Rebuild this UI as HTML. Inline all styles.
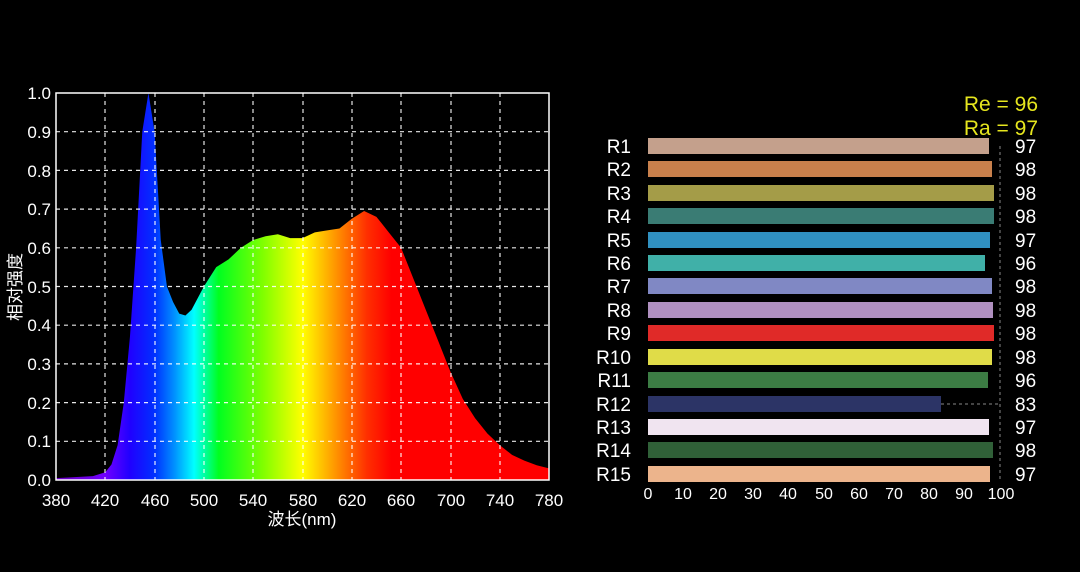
<!DOCTYPE html>
<html><head><meta charset="utf-8"><style>
body{margin:0;width:1080px;height:572px;background:#000;overflow:hidden;font-family:"Liberation Sans","Noto Sans CJK SC",sans-serif;color:#fff;position:relative}
.a{position:absolute}
.lbl{position:absolute;font-size:19px;text-align:right;width:42px;left:589px;line-height:18px;margin-top:2px}
.val{position:absolute;font-size:19px;left:1015px;line-height:18px;margin-top:2px}
.bar{position:absolute;left:648px;height:16px}
</style></head><body>
<svg class="a" style="left:0;top:0" width="1080" height="572">
<defs>
<linearGradient id="sp" gradientUnits="userSpaceOnUse" x1="0" y1="0" x2="400" y2="0">
<stop offset="0" stop-color="#6a00c0"/>
<stop offset="0.1" stop-color="#7000ff"/>
<stop offset="0.15" stop-color="#2000ff"/>
<stop offset="0.2" stop-color="#0030ff"/>
<stop offset="0.24" stop-color="#0090ff"/>
<stop offset="0.28" stop-color="#00ffff"/>
<stop offset="0.33" stop-color="#00ff20"/>
<stop offset="0.42" stop-color="#80ff00"/>
<stop offset="0.5" stop-color="#ffff00"/>
<stop offset="0.56" stop-color="#ffa000"/>
<stop offset="0.63" stop-color="#ff3000"/>
<stop offset="0.68" stop-color="#ff0000"/>
<stop offset="1" stop-color="#ff0000"/>
</linearGradient>
</defs>
<g transform="translate(56,480) scale(1.2325,-387)">
<polygon fill="url(#sp)" points="0,0 0,0.005 30,0.01 40,0.02 45,0.04 50,0.09 55,0.2 60,0.37 65,0.6 70,0.9 75,1.0 80,0.9 85,0.62 90,0.5 95,0.46 100,0.43 105,0.425 110,0.44 120,0.5 130,0.55 140,0.57 150,0.6 160,0.62 170,0.63 180,0.635 190,0.625 200,0.625 210,0.64 220,0.645 230,0.65 240,0.675 250,0.695 260,0.68 270,0.64 280,0.6 290,0.52 300,0.44 310,0.36 320,0.28 330,0.21 340,0.16 350,0.12 360,0.09 370,0.065 380,0.05 390,0.038 400,0.03 400,0"/>
</g>
<g stroke="#fff" stroke-width="1.2" stroke-dasharray="4,4" opacity="0.9">
<line x1="105" y1="93" x2="105" y2="480"/><line x1="155" y1="93" x2="155" y2="480"/><line x1="204" y1="93" x2="204" y2="480"/><line x1="253" y1="93" x2="253" y2="480"/><line x1="303" y1="93" x2="303" y2="480"/><line x1="352" y1="93" x2="352" y2="480"/><line x1="401" y1="93" x2="401" y2="480"/><line x1="451" y1="93" x2="451" y2="480"/><line x1="500" y1="93" x2="500" y2="480"/>
<line x1="56" y1="131.7" x2="549" y2="131.7"/><line x1="56" y1="170.4" x2="549" y2="170.4"/><line x1="56" y1="209.1" x2="549" y2="209.1"/><line x1="56" y1="247.8" x2="549" y2="247.8"/><line x1="56" y1="286.5" x2="549" y2="286.5"/><line x1="56" y1="325.2" x2="549" y2="325.2"/><line x1="56" y1="363.9" x2="549" y2="363.9"/><line x1="56" y1="402.6" x2="549" y2="402.6"/><line x1="56" y1="441.3" x2="549" y2="441.3"/>
</g>
<rect x="56" y="93" width="493" height="387" fill="none" stroke="#fff" stroke-width="1.5"/>
<g fill="#fff" font-size="17" font-family="Liberation Sans,sans-serif" text-anchor="end">
<text x="51" y="99">1.0</text><text x="51" y="138">0.9</text><text x="51" y="177">0.8</text><text x="51" y="215">0.7</text><text x="51" y="254">0.6</text><text x="51" y="293">0.5</text><text x="51" y="331">0.4</text><text x="51" y="370">0.3</text><text x="51" y="409">0.2</text><text x="51" y="447">0.1</text><text x="51" y="486">0.0</text>
</g>
<g fill="#fff" font-size="17" font-family="Liberation Sans,sans-serif" text-anchor="middle">
<text x="56" y="506">380</text><text x="105" y="506">420</text><text x="155" y="506">460</text><text x="204" y="506">500</text><text x="253" y="506">540</text><text x="303" y="506">580</text><text x="352" y="506">620</text><text x="401" y="506">660</text><text x="451" y="506">700</text><text x="500" y="506">740</text><text x="549" y="506">780</text>
<text x="302" y="525" font-family="Liberation Sans,Noto Sans CJK SC,sans-serif">波长(nm)</text>
<text transform="translate(21,287) rotate(-90)" font-family="Liberation Sans,Noto Sans CJK SC,sans-serif">相对强度</text>
</g>
<line x1="1000" y1="146" x2="1000" y2="482" stroke="#888" stroke-dasharray="3,3"/>
<line x1="941" y1="404" x2="1000" y2="404" stroke="#888" stroke-dasharray="3,3"/>
<g fill="#fff" font-size="16" font-family="Liberation Sans,sans-serif" text-anchor="middle">
<text x="648" y="499">0</text><text x="683" y="499">10</text><text x="718" y="499">20</text><text x="753" y="499">30</text><text x="788" y="499">40</text><text x="824" y="499">50</text><text x="859" y="499">60</text><text x="894" y="499">70</text><text x="929" y="499">80</text><text x="964" y="499">90</text><text x="1001" y="499">100</text>
</g>
<g fill="#e6e61e" font-size="21" font-family="Liberation Sans,sans-serif" text-anchor="end">
<text x="1038" y="111">Re = 96</text><text x="1038" y="135">Ra = 97</text>
</g>
</svg>
<div class="lbl" style="top:137px">R1</div><div class="bar" style="top:138px;width:341px;background:#c4a08c"></div><div class="val" style="top:137px">97</div>
<div class="lbl" style="top:160px">R2</div><div class="bar" style="top:161px;width:344px;background:#c8804c"></div><div class="val" style="top:160px">98</div>
<div class="lbl" style="top:184px">R3</div><div class="bar" style="top:185px;width:346px;background:#a49c48"></div><div class="val" style="top:184px">98</div>
<div class="lbl" style="top:207px">R4</div><div class="bar" style="top:208px;width:346px;background:#3a7c74"></div><div class="val" style="top:207px">98</div>
<div class="lbl" style="top:231px">R5</div><div class="bar" style="top:232px;width:342px;background:#3090c0"></div><div class="val" style="top:231px">97</div>
<div class="lbl" style="top:254px">R6</div><div class="bar" style="top:255px;width:337px;background:#40b0a8"></div><div class="val" style="top:254px">96</div>
<div class="lbl" style="top:277px">R7</div><div class="bar" style="top:278px;width:344px;background:#8088c4"></div><div class="val" style="top:277px">98</div>
<div class="lbl" style="top:301px">R8</div><div class="bar" style="top:302px;width:345px;background:#b090c0"></div><div class="val" style="top:301px">98</div>
<div class="lbl" style="top:324px">R9</div><div class="bar" style="top:325px;width:346px;background:#e02a28"></div><div class="val" style="top:324px">98</div>
<div class="lbl" style="top:348px">R10</div><div class="bar" style="top:349px;width:344px;background:#e0dc48"></div><div class="val" style="top:348px">98</div>
<div class="lbl" style="top:371px">R11</div><div class="bar" style="top:372px;width:340px;background:#3c7c44"></div><div class="val" style="top:371px">96</div>
<div class="lbl" style="top:395px">R12</div><div class="bar" style="top:396px;width:293px;background:#2c3466"></div><div class="val" style="top:395px">83</div>
<div class="lbl" style="top:418px">R13</div><div class="bar" style="top:419px;width:341px;background:#f0e4f0"></div><div class="val" style="top:418px">97</div>
<div class="lbl" style="top:441px">R14</div><div class="bar" style="top:442px;width:345px;background:#306038"></div><div class="val" style="top:441px">98</div>
<div class="lbl" style="top:465px">R15</div><div class="bar" style="top:466px;width:342px;background:#ecb48c"></div><div class="val" style="top:465px">97</div>
</body></html>
